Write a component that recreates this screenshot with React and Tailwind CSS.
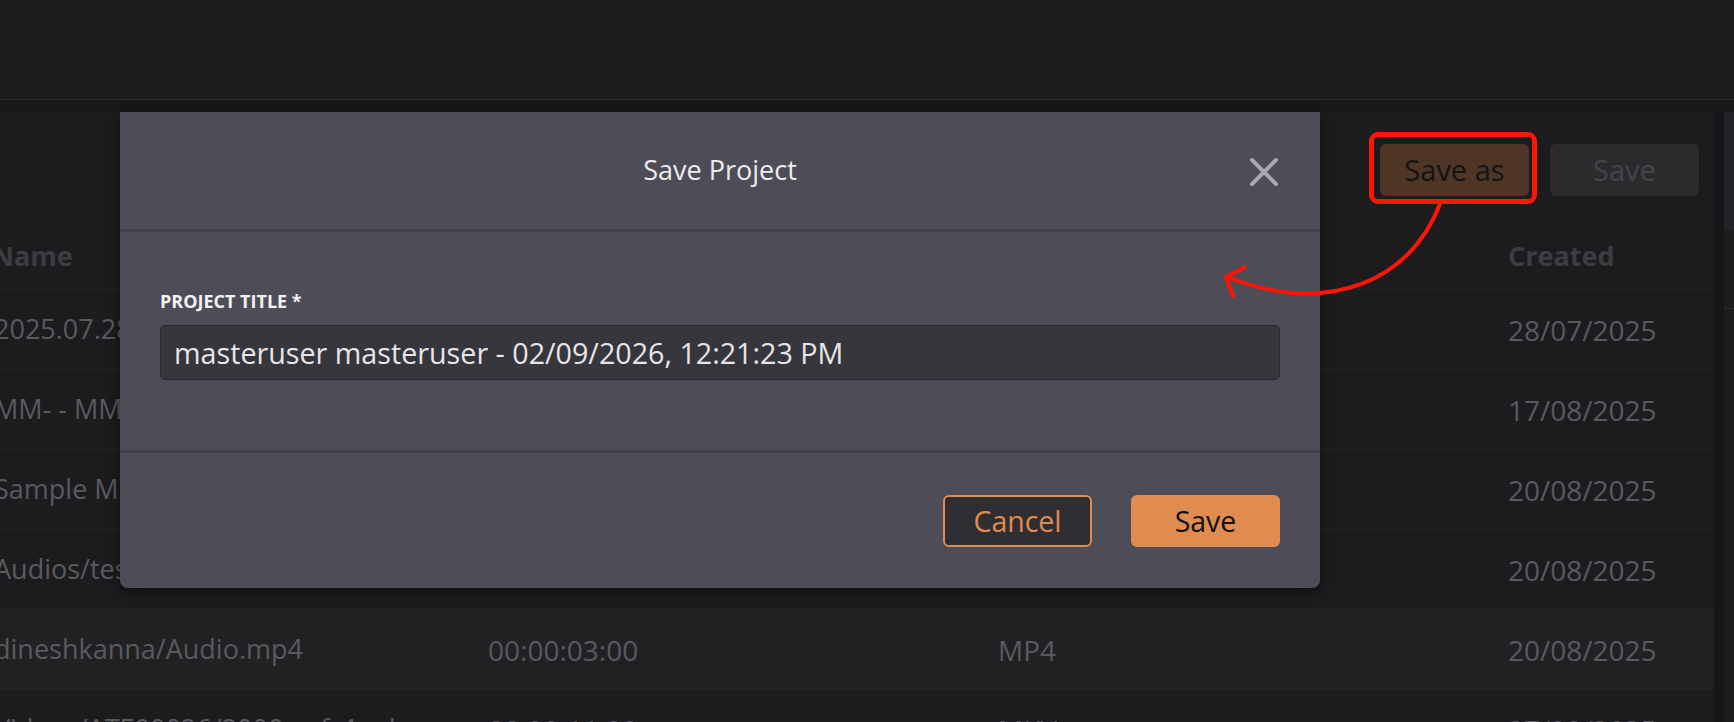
import React, { useState } from 'react';

const rows = [
  { name: '2025.07.28 Recording.mp4', duration: '00:00:12:00', type: 'MP4', created: '28/07/2025' },
  { name: 'MM- - MM Interview.mp4', duration: '00:00:08:00', type: 'MP4', created: '17/08/2025' },
  { name: 'Sample MP4 File.mp4', duration: '00:00:30:00', type: 'MP4', created: '20/08/2025' },
  { name: 'Audios/test_audio.mp3', duration: '00:00:05:00', type: 'MP3', created: '20/08/2025' },
  { name: 'dineshkanna/Audio.mp4', duration: '00:00:03:00', type: 'MP4', created: '20/08/2025', active: true },
  { name: 'Videos/ATE00026/2000_mf_4.mkv', duration: '00:00:11:00', type: 'MKV', created: '27/08/2025' },
];

const CloseIcon = () => (
  <svg width="30" height="30" viewBox="0 0 30 30" fill="none">
    <path d="M3 3L27 27M27 3L3 27" stroke="#a9a9ad" strokeWidth="4" strokeLinecap="round" />
  </svg>
);

const App = () => {
  const [title, setTitle] = useState('masteruser masteruser - 02/09/2026, 12:21:23 PM');

  return (
    <div className="relative h-[722px] w-[1734px] overflow-hidden bg-[#1c1c1f] font-['Open_Sans',sans-serif]">
      {/* top bar */}
      <header className="h-[100px] border-b border-[#2a2a2d] bg-[#1c1c1f]" />

      <div className="flex h-[622px] bg-[#18181a] pt-[12px]">
        {/* projects panel */}
        <main className="w-[1714px] overflow-hidden bg-[#1c1c1f]">
          <div className="flex h-[108px] items-start justify-end gap-[21px] pr-[15px] pt-[32px]">
            <div className="relative">
              <span className="absolute -bottom-[8px] -left-[11px] -right-[8px] -top-[12px] rounded-[9px] border-[5px] border-[#ff1408]" />
              <button className="relative h-[52px] w-[149px] rounded-[6px] bg-[#4e3526] text-[29px] text-[#141414]">
                Save as
              </button>
            </div>
            <button disabled className="h-[52px] w-[149px] rounded-[6px] bg-[#2b2b2e] text-[29px] text-[#444448]">
              Save
            </button>
          </div>

          {/* table header */}
          <div className="-ml-[8px] grid h-[70px] grid-cols-[496px_510px_510px_1fr] items-center border-b border-[#262629] pt-[3px] text-[27px] font-bold text-[#3d3d41]">
            <span>Name</span>
            <span>Duration</span>
            <span>Type</span>
            <span>Created</span>
          </div>

          {rows.map((row) => (
            <div
              key={row.name}
              className={`-ml-[6px] grid h-[80px] grid-cols-[494px_510px_510px_1fr] items-center border-b border-[#262629] text-[28px] text-[#5a5a5e] ${row.active ? 'bg-[#212124]' : ''}`}
            >
              <span className="truncate whitespace-nowrap text-[27px]">{row.name}</span>
              <span>{row.duration}</span>
              <span>{row.type}</span>
              <span>{row.created}</span>
            </div>
          ))}
        </main>

        <div className="w-[10px] bg-[#17171a]" />
        <aside className="flex w-[10px] flex-col bg-[#1d1d20]">
          <div className="h-[118px] bg-[#242428]" />
          <div className="mt-[78px] h-px bg-[#2a2a2d]" />
        </aside>
      </div>

      {/* save project dialog */}
      <div className="absolute left-[120px] top-[112px] w-[1200px] rounded-b-[8px] bg-[#4e4c57] shadow-[0_4px_14px_rgba(0,0,0,0.45)]">
        <div className="relative flex h-[120px] items-center justify-center border-b-[3px] border-[#43414b]">
          <h2 className="text-[27px] text-[#ececee]">Save Project</h2>
          <button className="absolute right-[41px] top-[45px]">
            <CloseIcon />
          </button>
        </div>

        <div className="border-b-[3px] border-[#43414b] px-[40px] pb-[70px] pt-[57px]">
          <label className="mb-[12px] block text-[18px] font-bold leading-[24px] text-[#f2f2f4]">
            PROJECT TITLE *
          </label>
          <input
            value={title}
            onChange={(e) => setTitle(e.target.value)}
            className="h-[55px] w-full rounded-[5px] border border-[#2a292f] bg-[#37363c] px-[13px] text-[28.7px] text-[#e6e6e8] outline-none"
          />
        </div>

        <div className="flex justify-end gap-[39px] px-[40px] pb-[41px] pt-[42px]">
          <button className="h-[52px] w-[149px] rounded-[6px] border-2 border-[#e08b4f] bg-[#2f2e33] text-[28.5px] text-[#e28b4f]">
            Cancel
          </button>
          <button className="h-[52px] w-[149px] rounded-[6px] bg-[#e08b50] text-[28.5px] text-[#111111]">
            Save
          </button>
        </div>
      </div>

      {/* callout arrow from the highlighted button */}
      <svg className="pointer-events-none absolute left-0 top-0" width="1734" height="722" fill="none">
        <path d="M1440 204 C1410 282 1328 316 1227 277" stroke="#ff1408" strokeWidth="4" strokeLinecap="round" />
        <path d="M1245 267 L1226 277 L1233 296" stroke="#ff1408" strokeWidth="4" strokeLinecap="round" strokeLinejoin="round" />
      </svg>
    </div>
  );
};

export default App;
